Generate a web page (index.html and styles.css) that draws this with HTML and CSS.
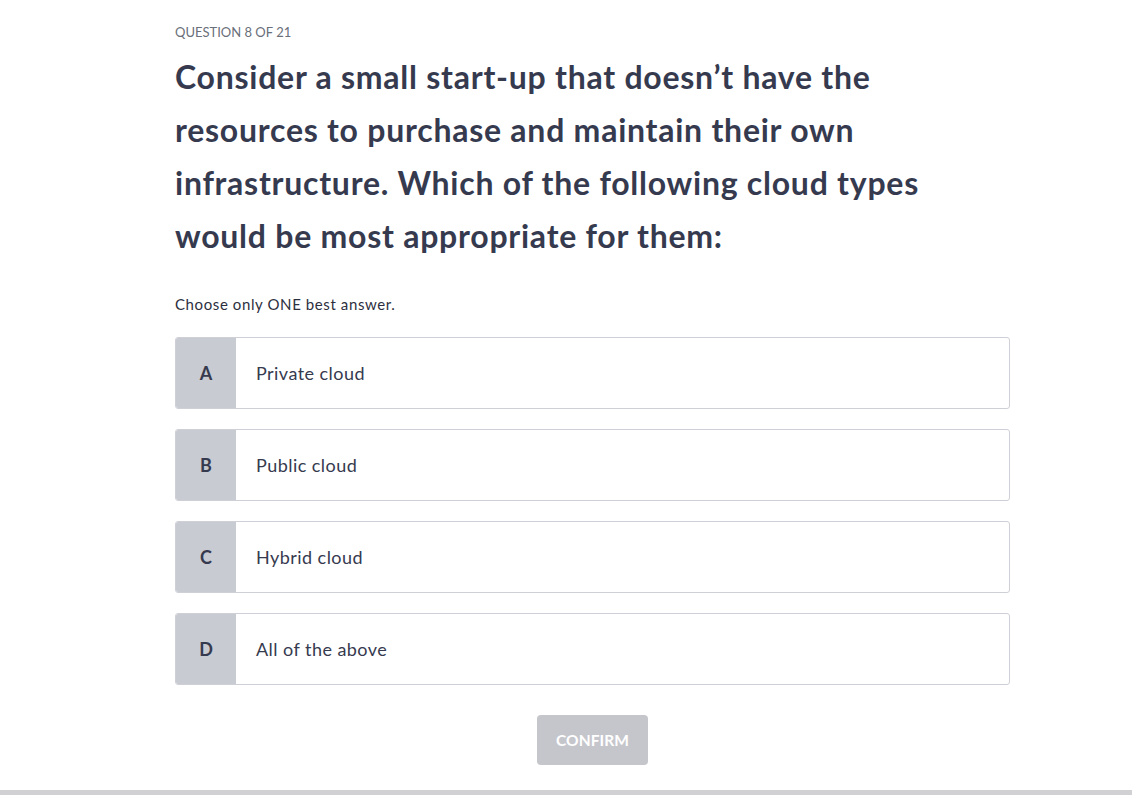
FILE: index.html
```html
<!DOCTYPE html>
<html>
<head>
<meta charset="utf-8">
<link rel="stylesheet" href="styles.css">
</head>
<body>
<main class="quiz">
  <div class="counter">QUESTION 8 OF 21</div>
  <h1 class="question">Consider a small start-up that doesn’t have the resources to purchase and maintain their own infrastructure. Which of the following cloud types would be most appropriate for them:</h1>
  <p class="hint">Choose only ONE best answer.</p>
  <ul class="options">
    <li class="option"><span class="letter">A</span><span class="label">Private cloud</span></li>
    <li class="option"><span class="letter">B</span><span class="label">Public cloud</span></li>
    <li class="option"><span class="letter">C</span><span class="label">Hybrid cloud</span></li>
    <li class="option"><span class="letter">D</span><span class="label">All of the above</span></li>
  </ul>
  <div class="actions"><button class="confirm" disabled>CONFIRM</button></div>
</main>
<div class="bottom-bar"></div>
</body>
</html>
```
FILE: styles.css
```css
html, body {
  margin: 0;
  padding: 0;
  background: #ffffff;
  font-family: "Lato", "Noto Sans", sans-serif;
  color: #363a4f;
}
body {
  height: 795px;
  display: flex;
  flex-direction: column;
  overflow: hidden;
}
.quiz {
  flex: 1;
  width: 835px;
  margin-left: 175px;
  padding-top: 22px;
  box-sizing: border-box;
}
.counter {
  font-size: 13px;
  line-height: 20px;
  color: #6a6f7a;
}
.question {
  margin: 8px 0 0;
  font-size: 32px;
  line-height: 53px;
  font-weight: 700;
  letter-spacing: 0.75px;
  color: #363a4f;
  width: 780px;
}
.hint {
  margin: 31px 0 0;
  font-size: 15px;
  line-height: 22px;
  letter-spacing: 0.6px;
  color: #2d2f3e;
}
.options {
  list-style: none;
  margin: 22px 0 0;
  padding: 0;
  display: flex;
  flex-direction: column;
  gap: 20px;
}
.option {
  display: flex;
  height: 72px;
  border: 1px solid #cfd0d7;
  border-radius: 3px;
  box-sizing: border-box;
  overflow: hidden;
}
.letter {
  width: 60px;
  flex: none;
  background: #c9cbd3;
  display: flex;
  align-items: center;
  justify-content: center;
  font-size: 18px;
  font-weight: 700;
  color: #363a4f;
}
.label {
  display: flex;
  align-items: center;
  padding-left: 20px;
  font-size: 18px;
  letter-spacing: 0.45px;
  color: #363a4f;
}
.actions {
  display: flex;
  justify-content: center;
  margin-top: 30px;
}
.confirm {
  width: 111px;
  height: 50px;
  border: none;
  border-radius: 4px;
  background: #c5c6cc;
  color: #ffffff;
  font-family: inherit;
  font-size: 15.5px;
  font-weight: 700;
  letter-spacing: 0.1px;
}
.bottom-bar {
  height: 5px;
  background: #d1d1d3;
  flex: none;
}
```
